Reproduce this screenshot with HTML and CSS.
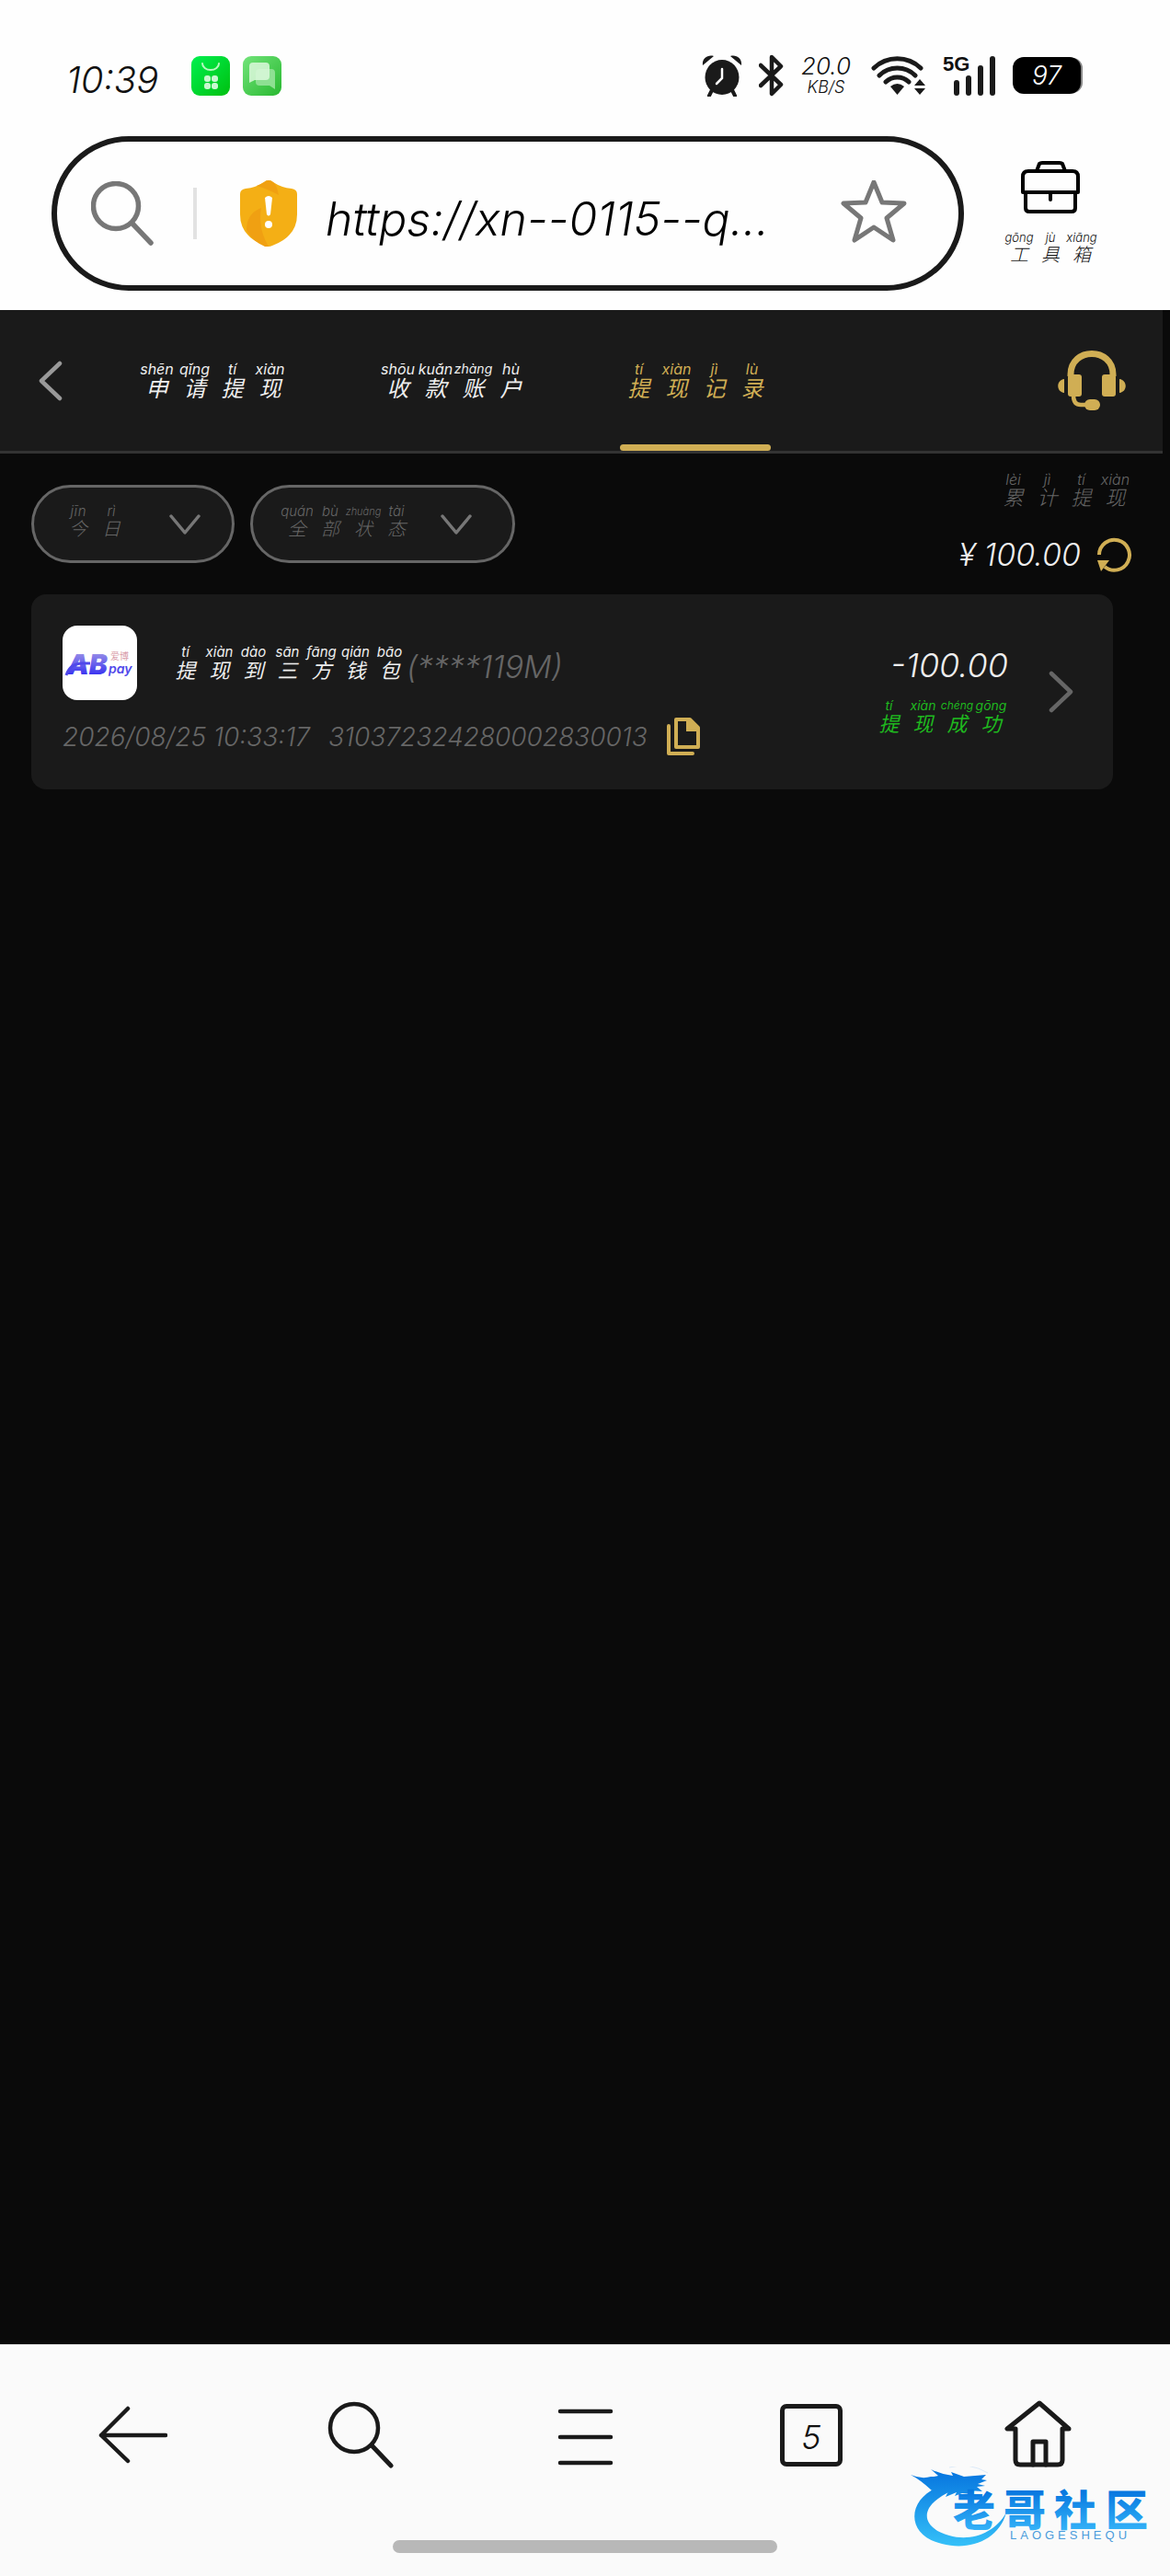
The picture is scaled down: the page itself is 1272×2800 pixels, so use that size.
FILE: index.html
```html
<!DOCTYPE html>
<html lang="zh-CN">
<head>
<meta charset="utf-8">
<meta name="viewport" content="width=device-width, initial-scale=1">
<title>提现记录</title>
<link rel="stylesheet" href="styles.css">
</head>
<body>
<div class="status">
  <time class="status-time">10:39</time>
  <svg class="app-icon" width="42" height="43" viewBox="0 0 42 43" aria-hidden="true">
    <defs><linearGradient id="g1" x1="0" y1="0" x2="1" y2="1"><stop offset="0" stop-color="#00f050"/><stop offset="1" stop-color="#00c010"/></linearGradient></defs>
    <rect width="42" height="43" rx="9" fill="url(#g1)"/>
    <path d="M12 8a9 7 0 0 0 18 0" fill="none" stroke="#b8f8c0" stroke-width="2" stroke-linecap="round"/>
    <g fill="#c8f8d0"><rect x="14" y="21" width="7" height="7" rx="3"/><rect x="22" y="21" width="7" height="7" rx="3"/><rect x="14" y="29" width="7" height="7" rx="3"/><rect x="22" y="29" width="7" height="7" rx="3"/></g>
  </svg>
  <svg class="app-icon" width="42" height="43" viewBox="0 0 42 43" aria-hidden="true">
    <defs><linearGradient id="g2" x1="0" y1="0" x2="1" y2="1"><stop offset="0" stop-color="#72e47a"/><stop offset="1" stop-color="#28b830"/></linearGradient></defs>
    <rect width="42" height="43" rx="9" fill="url(#g2)"/>
    <path d="M18 14h13a4 4 0 0 1 4 4v18l-6-4H18a4 4 0 0 1-4-4V18a4 4 0 0 1 4-4z" fill="#8ee092"/>
    <path d="M11 7h14a4 4 0 0 1 4 4v11a4 4 0 0 1-4 4H13l-6 3V11a4 4 0 0 1 4-4z" fill="#dcf8dc" opacity=".85"/>
  </svg>
  <div class="status-right">
    <svg width="44" height="45" viewBox="0 0 44 45" aria-hidden="true">
      <g fill="#1a1a1a"><ellipse cx="22" cy="24" rx="18.500" ry="19"/><path d="M1 11C0 4 6-1 13 1zM43 11C44 4 38-1 31 1z"/></g>
      <path d="M11 38l-3 6M33 38l3 6" stroke="#1a1a1a" stroke-width="4" stroke-linecap="round"/>
      <path d="M22 15v10l-6 6" fill="none" stroke="#fff" stroke-width="2.500" stroke-linecap="round"/>
    </svg>
    <svg width="28" height="46" viewBox="0 0 28 46" aria-hidden="true"><path d="M2 12l22 21-10 10V3l10 10L2 34" fill="none" stroke="#1a1a1a" stroke-width="4.500" stroke-linejoin="round" stroke-linecap="round"/></svg>
    <div class="speed"><span>20.0</span><small>KB/S</small></div>
    <svg class="wifi" width="60" height="44" viewBox="0 0 60 44" aria-hidden="true">
      <g fill="none" stroke="#1a1a1a" stroke-width="5" stroke-linecap="round"><path d="M3 14a37 37 0 0 1 51 0M9 22a28 28 0 0 1 39 0M16 29a18 18 0 0 1 25 0"/></g>
      <path d="M21 34q7.500-6 15 0l-7.500 9z" fill="#1a1a1a"/><path d="M53 26l6 7H47zM53 43l6-7H47z" fill="#1a1a1a"/>
    </svg>
    <div class="signal"><b>5G</b>
      <svg width="46" height="43" viewBox="0 0 46 43" aria-hidden="true"><path d="M3 29v11M16 24v16M29 13v27M42 3v37" stroke="#1a1a1a" stroke-width="6" stroke-linecap="round"/></svg>
    </div>
    <div class="battery">97</div>
  </div>
</div>

<div class="address">
  <form class="url-bar">
    <svg class="url-search" width="70" height="70" viewBox="0 0 70 70" aria-hidden="true"><g fill="none" stroke="#777" stroke-width="5.500" stroke-linecap="round"><circle cx="27" cy="27" r="24.500"/><path d="M45 46l20 21"/></g></svg>
    <i class="url-rule"></i>
    <svg width="64" height="72" viewBox="0 0 64 72" aria-hidden="true"><path d="M32 0q3 0 5 2 9 6 20 7 6 1 6 6v22q0 24-27 34-4 2-8 0Q1 61 1 37V15q0-5 6-6 11-1 20-7 2-2 5-2z" fill="#f4af15"/><path d="M32 0q3 0 5 2 4 3 6 14Q30 9 19 6q5-2 8-4 2-2 5-2zM8 54q0-18 16-24-4 22 8 42h-4Q14 66 8 54z" fill="#f0a012"/><path d="M28 19q4-4 8 0l-2 18q-2 3-4 0z" fill="#fff"/><circle cx="32" cy="48" r="4" fill="#fff"/></svg>
    <input class="url-input" type="text" aria-label="网址" value="https://xn--0115--q...">
    <button class="plain" type="button" aria-label="收藏"><svg width="72" height="72" viewBox="0 3 72 72" aria-hidden="true"><path d="M36 5l9 22 24 1-19 16 7 24-21-14-21 14 7-24L3 28l24-1z" fill="none" stroke="#777" stroke-width="5" stroke-linejoin="round"/></svg></button>
  </form>
  <button class="plain toolbox" type="button">
    <svg width="64" height="60" viewBox="0 0 64 60" aria-hidden="true"><g fill="none" stroke="#000" stroke-width="4" stroke-linejoin="round" stroke-linecap="round"><path d="M17 12l3-8q1-1 3-1h19q2 0 3 1l3 8M2 35V18q0-6 6-6h48q6 0 6 6v17zM5 35v17q0 4 4 4h46q4 0 4-4V35M32 35v8"/></g></svg>
    <span class="py py-tool"><ruby>工<rt>gōng</rt></ruby><ruby>具<rt>jù</rt></ruby><ruby>箱<rt>xiāng</rt></ruby></span>
  </button>
</div>

<main>
  <header class="head">
    <a class="back" href="#" aria-label="返回"><svg width="28" height="44" viewBox="0 0 28 44" aria-hidden="true"><path d="M25 3L5 22l20 19" fill="none" stroke="#999" stroke-width="4.500" stroke-linecap="round" stroke-linejoin="round"/></svg></a>
    <nav class="tabs">
      <a class="tab py" href="#"><ruby>申<rt>shēn</rt></ruby><ruby>请<rt>qǐng</rt></ruby><ruby>提<rt>tí</rt></ruby><ruby>现<rt>xiàn</rt></ruby></a>
      <a class="tab py" href="#"><ruby>收<rt>shōu</rt></ruby><ruby>款<rt>kuǎn</rt></ruby><ruby>账<rt class="long">zhàng</rt></ruby><ruby>户<rt>hù</rt></ruby></a>
      <a class="tab py active" href="#" aria-current="page"><ruby>提<rt>tí</rt></ruby><ruby>现<rt>xiàn</rt></ruby><ruby>记<rt>jì</rt></ruby><ruby>录<rt>lù</rt></ruby></a>
    </nav>
    <button class="plain service" type="button" aria-label="客服"><svg width="74" height="66" viewBox="0 0 74 66" aria-hidden="true"><g fill="#d0ae54"><rect x="11" y="26" width="15" height="24" rx="3"/><rect x="48" y="26" width="15" height="24" rx="3"/><path d="M7 31v15C-2 45-2 32 7 31zM67 31v15c9-1 9-14 0-15z"/><rect x="29" y="53" width="17" height="12" rx="6"/></g><path d="M14 28V26C14-4 60-4 60 26v2" fill="none" stroke="#d0ae54" stroke-width="7"/><path d="M17 49q0 10 8 10h6" fill="none" stroke="#d0ae54" stroke-width="4.500"/></svg></button>
  </header>

  <section class="summary">
    <div class="filters">
      <button class="pill" type="button" aria-haspopup="listbox"><span class="py py-filter"><ruby>今<rt>jīn</rt></ruby><ruby>日<rt>rì</rt></ruby></span>
        <svg width="34" height="24" viewBox="0 0 34 24" aria-hidden="true"><path d="M2 3l15 18L32 3" fill="none" stroke="#777" stroke-width="3.500" stroke-linecap="round" stroke-linejoin="round"/></svg></button>
      <button class="pill pill-wide" type="button" aria-haspopup="listbox"><span class="py py-filter"><ruby>全<rt>quán</rt></ruby><ruby>部<rt>bù</rt></ruby><ruby>状<rt class="long">zhuàng</rt></ruby><ruby>态<rt>tài</rt></ruby></span>
        <svg width="34" height="24" viewBox="0 0 34 24" aria-hidden="true"><path d="M2 3l15 18L32 3" fill="none" stroke="#777" stroke-width="3.500" stroke-linecap="round" stroke-linejoin="round"/></svg></button>
    </div>
    <div class="total">
      <span class="py py-record muted"><ruby>累<rt>lèi</rt></ruby><ruby>计<rt>jì</rt></ruby><ruby>提<rt>tí</rt></ruby><ruby>现<rt>xiàn</rt></ruby></span>
      <div class="total-row"><span>¥ 100.00</span>
        <button class="plain" type="button" aria-label="刷新"><svg width="40" height="40" viewBox="0 0 40 40" aria-hidden="true"><path d="M4 20a16.500 16.500 0 1 1 6 13" fill="none" stroke="#d0ae54" stroke-width="4"/><path d="M2 26h13L6 38z" fill="#d0ae54"/></svg></button></div>
    </div>
  </section>

  <article class="card">
    <div class="card-main">
      <div class="card-title">
        <svg class="logo" width="81" height="81" viewBox="0 0 81 81" role="img" aria-label="ABpay">
          <defs><linearGradient id="g3" x1="0" y1="0" x2="0" y2="1"><stop offset="0.200" stop-color="#9188e8"/><stop offset="0.800" stop-color="#3c35f0"/></linearGradient></defs>
          <rect width="81" height="81" rx="16" fill="#fff"/>
          <text class="logo-ab" x="5" y="53" fill="url(#g3)">AB</text>
          <path d="M4 54q4-13 18-13h8" fill="none" stroke="#5048ea" stroke-width="3"/>
          <text class="logo-cn" x="52" y="37" fill="#d89aa8">爱博</text>
          <text class="logo-pay" x="50" y="52" fill="#5048ea">pay</text>
        </svg>
        <div class="name"><span class="py py-record"><ruby>提<rt>tí</rt></ruby><ruby>现<rt>xiàn</rt></ruby><ruby>到<rt>dào</rt></ruby><ruby>三<rt>sān</rt></ruby><ruby>方<rt>fāng</rt></ruby><ruby>钱<rt>qián</rt></ruby><ruby>包<rt>bāo</rt></ruby></span><span class="account">(****119M)</span></div>
      </div>
      <div class="card-meta">
        <time>2026/08/25 10:33:17</time><span>310372324280002830013</span>
        <button class="plain" type="button" aria-label="复制"><svg width="38" height="42" viewBox="0 0 38 42" aria-hidden="true"><path d="M3 9v30h26" fill="none" stroke="#d0ae54" stroke-width="4" stroke-linecap="round" stroke-linejoin="round"/><path d="M11 2h15l9 9v21H11z" fill="none" stroke="#d0ae54" stroke-width="4" stroke-linejoin="round"/><path d="M22 2h6l8 9v4H22z" fill="#d0ae54"/></svg></button>
      </div>
    </div>
    <div class="card-side">
      <strong class="amount">-100.00</strong>
      <span class="py py-record success"><ruby>提<rt>tí</rt></ruby><ruby>现<rt>xiàn</rt></ruby><ruby>成<rt class="long">chéng</rt></ruby><ruby>功<rt>gōng</rt></ruby></span>
    </div>
    <a class="more" href="#" aria-label="查看详情"><svg width="30" height="46" viewBox="0 0 30 46" aria-hidden="true"><path d="M4 3l21 20L4 43" fill="none" stroke="#666" stroke-width="4.500" stroke-linecap="round" stroke-linejoin="round"/></svg></a>
  </article>
</main>

<footer class="browser-nav">
  <div class="nav-row">
    <button class="plain" type="button" aria-label="后退"><svg width="76" height="76" viewBox="0 0 76 76" aria-hidden="true"><path d="M33 9L4 38l29 28M4 38h70" fill="none" stroke="#1a1a1a" stroke-width="4.500" stroke-linecap="round" stroke-linejoin="round"/></svg></button>
    <button class="plain" type="button" aria-label="搜索"><svg width="76" height="76" viewBox="0 0 76 76" aria-hidden="true"><g fill="none" stroke="#1a1a1a" stroke-width="4.500" stroke-linecap="round"><circle cx="33" cy="30" r="26"/><path d="M53 50l20 21" stroke-width="5"/></g></svg></button>
    <button class="plain" type="button" aria-label="菜单"><svg width="76" height="76" viewBox="0 0 76 76" aria-hidden="true"><path d="M11 12h55M11 40h55M11 68h55" stroke="#1a1a1a" stroke-width="4.500" stroke-linecap="round"/></svg></button>
    <button class="plain" type="button" aria-label="标签页 5"><span class="tab-count">5</span></button>
    <button class="plain" type="button" aria-label="主页"><svg width="76" height="76" viewBox="0 0 76 76" aria-hidden="true"><g fill="none" stroke="#1a1a1a" stroke-width="5" stroke-linejoin="round" stroke-linecap="round"><path d="M14 31v34q0 5 5 5h41q5 0 5-5V31h7L40 3 5 31h7z"/><path d="M33 70V45h14v25"/></g></svg></button>
  </div>
  <div class="handle"></div>
  <svg class="watermark" width="264" height="90" viewBox="0 0 264 90" role="img" aria-label="老哥社区">
    <defs><linearGradient id="g4" gradientUnits="userSpaceOnUse" x1="0" y1="8" x2="0" y2="86"><stop offset="0" stop-color="#0878e0"/><stop offset="1" stop-color="#35c0f8"/></linearGradient>
    <linearGradient id="g5" x1="0" y1="0" x2="0" y2="1"><stop offset=".25" stop-color="#0878e0"/><stop offset=".95" stop-color="#38b8fa"/></linearGradient></defs>
    <path d="M36 20C-4 32-8 74 34 84c30 8 62-4 70-34-12 22-38 32-62 25C10 66 8 42 46 26z" fill="url(#g4)"/>
    <path d="M0 9q12 5 22 2 4 0 8-1l-8-7q12 6 24 7l-2-4 14 5 24-2-5 5 6 1-10 4 8 2-9 1 6 5q-8-1-14 0l2 3-10-1-8 3 2-4-12 5 3-6-12 4 8-7-14 2Q10 14 0 9z" fill="url(#g4)"/>
    <path d="M42 1q22-6 42 6" fill="none" stroke="#dceaf8" stroke-width="1"/>
    <text class="wm-cn" x="46 101 156 212" y="64" fill="url(#g5)">老哥社区</text>
    <text class="wm-en" x="108" y="79" fill="#4a9cdc">LAOGESHEQU</text>
  </svg>
</footer>
</body>
</html>
```
FILE: styles.css
```css
* { box-sizing: border-box; }

body {
  margin: 0;
  min-height: 100vh;
  display: flex;
  flex-direction: column;
  background: #fefefe;
  color: #111;
  font-family: Inter, "Noto Sans CJK SC", sans-serif;
  font-style: italic;
  font-weight: 300;
}

svg { display: block; flex: none; }

.plain {
  padding: 0;
  border: 0;
  background: none;
  color: inherit;
  font: inherit;
  flex: none;
}

/* Characters with their pinyin above, one cell each */
.py { display: flex; }
.py ruby {
  display: flex;
  flex-direction: column-reverse;
  align-items: center;
  width: 37px;
  font-size: 22px;
  line-height: 24px;
}
.py rt {
  display: block;
  font-size: 16px;
  line-height: 16px;
  white-space: nowrap;
}
.py rt.long { font-size: 12px; }
.py-filter { padding-bottom: 6px; }
.py-filter ruby { width: 36px; font-size: 20px; line-height: 22px; }
.py-filter rt { font-size: 15px; }
.py-filter rt.long { font-size: 11px; }
.py-tool ruby { width: 34px; font-size: 20px; line-height: 22px; }
.py-tool rt { font-size: 13px; }

/* System status */
.status {
  display: flex;
  align-items: center;
  gap: 14px;
  padding: 56px 94px 40px 72px;
}
.status-time {
  align-self: flex-end;
  margin-right: 22px;
  font-size: 40px;
  line-height: 42px;
}
.status-right {
  display: flex;
  align-items: center;
  gap: 18px;
  height: 52px;
  margin-left: auto;
}
.speed {
  display: flex;
  flex-direction: column;
  align-items: center;
  font-size: 26px;
  line-height: 26px;
}
.speed small { font-size: 18px; line-height: 20px; }
.wifi { margin-left: 4px; }
.signal { display: flex; align-items: flex-start; }
.signal b {
  width: 12px;
  font: bold 22px/18px "Liberation Sans", sans-serif;
}
.battery {
  width: 74px;
  margin-right: 3px;
  border-radius: 12px;
  background: #000;
  box-shadow: 3px 0 0 -1px #888;
  color: #fff;
  font-size: 28px;
  line-height: 40px;
  text-align: center;
}

/* Address bar */
.address {
  display: flex;
  align-items: flex-start;
  gap: 44px;
  padding: 0 80px 21px 56px;
}
.url-bar {
  flex: 1;
  display: flex;
  align-items: center;
  min-width: 0;
  height: 168px;
  padding: 0 56px 0 37px;
  border: 6px solid #1a1a1a;
  border-radius: 84px;
}
.url-rule {
  width: 4px;
  height: 56px;
  margin: 0 46px 0 41px;
  background: #e2e2e2;
}
.url-input {
  flex: 1;
  min-width: 0;
  margin: 0 20px 0 30px;
  padding: 12px 0 0;
  border: 0;
  outline: 0;
  background: none;
  color: #000;
  font: inherit;
  font-size: 50px;
}
.toolbox {
  display: flex;
  flex-direction: column;
  align-items: center;
  gap: 16px;
  width: 100px;
  padding-top: 26px;
}

/* Page */
main { flex: 1; background: #0a0a0a; color: #eee; }
.head {
  display: flex;
  align-items: center;
  margin-right: 8px;
  padding: 0 40px;
  background: #1a1a1a;
  border-bottom: 3px solid #333;
}
.tabs { display: flex; gap: 98px; margin-left: 82px; }
.tab {
  position: relative;
  align-items: center;
  height: 153px;
  color: inherit;
  text-decoration: none;
  font-weight: 400;
}
.tab ruby { width: 41px; font-size: 24px; line-height: 26px; }
.tab rt { font-size: 16px; line-height: 18px; }
.tab rt.long { font-size: 14px; }
.active { color: #d0ae54; }
.active::after {
  content: "";
  position: absolute;
  inset: auto 0 0;
  height: 7px;
  border-radius: 4px;
  background: #d0ae54;
}
.service { margin-left: auto; }

.summary {
  display: flex;
  justify-content: space-between;
  padding: 20px 41px 23px 34px;
}
.filters { display: flex; gap: 17px; padding-top: 14px; }
.pill {
  display: flex;
  align-items: center;
  gap: 45px;
  height: 85px;
  padding: 0 34px 0 30px;
  border: 3px solid #666;
  border-radius: 43px;
  background: #1a1a1a;
  color: #666;
  font: inherit;
}
.pill-wide { gap: 30px; padding-right: 44px; }
.muted { color: #666; }
.total { display: flex; flex-direction: column; align-items: flex-end; gap: 30px; }
.total-row {
  display: flex;
  align-items: center;
  gap: 16px;
  font-size: 34px;
  line-height: 40px;
}

.card {
  display: flex;
  align-items: center;
  margin: 0 62px 0 34px;
  padding: 34px 41px 34px 34px;
  border-radius: 16px;
  background: #1a1a1a;
}
.card-main { display: flex; flex-direction: column; gap: 16px; }
.card-title { display: flex; align-items: center; gap: 34px; }
.name { display: flex; align-items: flex-end; }
.name .py { font-weight: 400; }
.name rt { font-size: 15px; }
.account { color: #666; font-size: 34px; line-height: 32px; }
.card-meta {
  display: flex;
  align-items: center;
  gap: 20px;
  height: 47px;
  color: #666;
  font-size: 28px;
}
.card-side {
  display: flex;
  flex-direction: column;
  align-items: flex-end;
  gap: 18px;
  margin-left: auto;
}
.amount { font-size: 36px; font-weight: 300; line-height: 36px; }
.success { color: #1fb81f; font-weight: 400; }
.success rt { font-size: 14px; }
.more { margin-left: 43px; }

.logo-ab { font: italic 900 30px Inter, sans-serif; }
.logo-cn { font: normal 10px "Noto Sans CJK SC", sans-serif; }
.logo-pay { font: italic 600 14px Inter, sans-serif; }

/* Browser bar */
.browser-nav {
  position: relative;
  padding: 60px 21px 25px;
  border-top: 1px solid #ddd;
  background: #fafafa;
}
.nav-row { display: grid; grid-template-columns: repeat(5, 1fr); justify-items: center; }
.tab-count {
  display: block;
  width: 68px;
  height: 68px;
  border: 5px solid #1a1a1a;
  border-radius: 7px;
  font-size: 36px;
  line-height: 62px;
}
.handle {
  width: 34%;
  height: 14px;
  margin: 76px auto 0;
  border-radius: 7px;
  background: #b8b8b8;
}
.watermark { position: absolute; right: 18px; bottom: 29px; }
.wm-cn { font: normal 900 46px "Noto Sans CJK SC", sans-serif; }
.wm-en { font: normal 400 13px "Liberation Sans", sans-serif; letter-spacing: 4px; }
```
